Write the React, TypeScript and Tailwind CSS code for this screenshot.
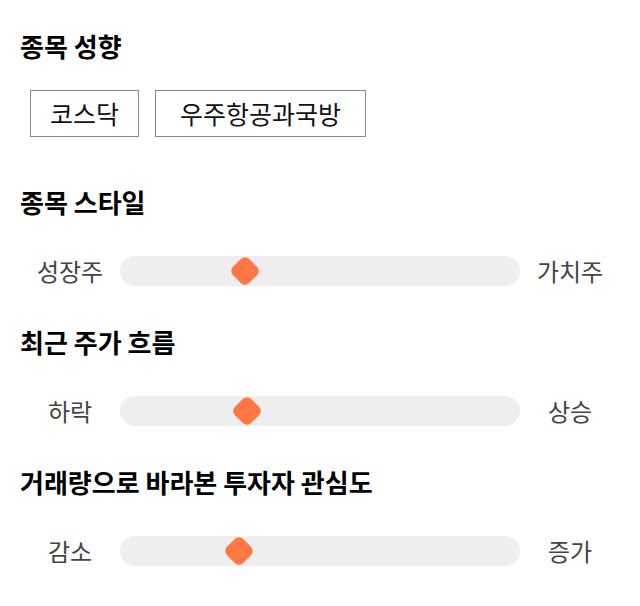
const FONT = { fontFamily: '"Noto Sans CJK KR", "Noto Sans", sans-serif' };

type SliderProps = { left: string; right: string; pos: number };

function StyleSlider({ left, right, pos }: SliderProps) {
  return (
    <div className="flex h-[30px] items-center">
      <div className="w-[100px] text-center text-[24px] leading-[30px] text-[#444]">{left}</div>
      <div className="relative h-[30px] flex-1 rounded-full bg-[#eeeeee]">
        <div
          className="absolute top-1/2 h-[23px] w-[23px] -translate-x-1/2 -translate-y-1/2 rotate-45 rounded-[6px] bg-[#ff7843]"
          style={{ left: `${pos}%` }}
        />
      </div>
      <div className="w-[100px] text-center text-[24px] leading-[30px] text-[#444]">{right}</div>
    </div>
  );
}

export default function App() {
  return (
    <div className="min-h-screen bg-white px-5 pt-[28px]" style={FONT}>
      <h2 className="text-[26px] font-bold leading-[36px] text-black">종목 성향</h2>
      <div className="ml-[10px] mt-[26px] flex gap-4">
        <span className="border border-[#888] px-[19px] py-[6px] text-[25px] leading-[33px] text-[#111]">코스닥</span>
        <span className="border border-[#888] px-[24px] py-[6px] text-[25px] leading-[33px] text-[#111]">우주항공과국방</span>
      </div>

      <h2 className="mt-[47px] text-[26px] font-bold leading-[36px] text-black">종목 스타일</h2>
      <div className="mt-[36px]">
        <StyleSlider left="성장주" right="가치주" pos={31.2} />
      </div>

      <h2 className="mt-[38px] text-[26px] font-bold leading-[36px] text-black">최근 주가 흐름</h2>
      <div className="mt-[36px]">
        <StyleSlider left="하락" right="상승" pos={31.7} />
      </div>

      <h2 className="mt-[38px] text-[26px] font-bold leading-[36px] text-black">거래량으로 바라본 투자자 관심도</h2>
      <div className="mt-[36px]">
        <StyleSlider left="감소" right="증가" pos={29.8} />
      </div>
    </div>
  );
}
